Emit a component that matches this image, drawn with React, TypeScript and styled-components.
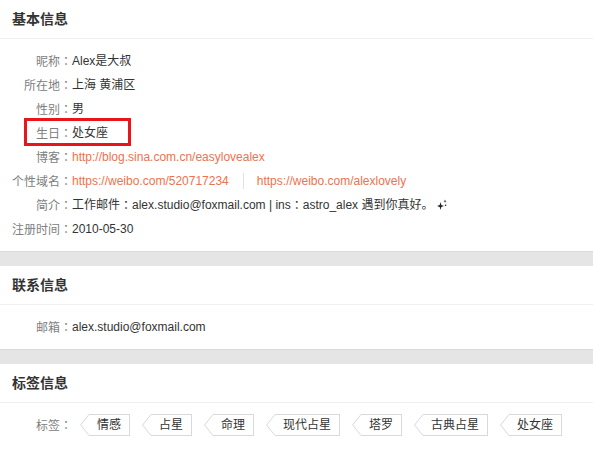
import styled, { createGlobalStyle } from "styled-components";

const GlobalStyle = createGlobalStyle`
  html, body {
    margin: 0;
    padding: 0;
    background: #fff;
  }
  body {
    font-family: "Liberation Sans", Arial, "Noto Sans CJK SC", sans-serif;
    font-size: 12px;
    color: #333;
  }
`;

const Page = styled.div`
  display: flex;
  flex-direction: column;
  width: 593px;
`;

const Section = styled.section`
  background: #fff;
`;

const Header = styled.div`
  height: 38px;
  line-height: 38px;
  padding: 0 12px;
  border-bottom: 1px solid #f0f0f0;
  font-size: 14px;
  font-weight: bold;
  color: #333;
`;

const Body = styled.div`
  padding: 10px 12px;
`;

const Band = styled.div`
  height: 15px;
  background: #e5e5e5;
  border-top: 1px solid #dadada;
  box-sizing: border-box;
`;

const Row = styled.div`
  position: relative;
  display: flex;
  align-items: center;
  line-height: 24px;
  height: 24px;
`;

const Label = styled.span`
  width: 60px;
  flex-shrink: 0;
  text-align: right;
  color: #808080;
  white-space: nowrap;
`;

// full-width colon, centred in its box like the original
const Colon = styled.span`
  font-family: "Noto Sans CJK TC", sans-serif;
`;

const Value = styled.span`
  color: #333;
  white-space: nowrap;
  display: inline-flex;
  align-items: center;
`;

const Link = styled.a`
  color: #eb7350;
  text-decoration: none;
`;

const Divider = styled.span`
  display: inline-block;
  width: 1px;
  height: 16px;
  margin: 0 13px 0 14px;
  background: #e2e2e2;
`;

const Highlight = styled.span`
  position: absolute;
  left: 12px;
  top: -3px;
  width: 107px;
  height: 28px;
  border: 3px solid #e8161b;
  box-sizing: border-box;
  pointer-events: none;
`;

const TagList = styled.div`
  display: flex;
  align-items: center;
  gap: 12px;
  margin-left: 8px;
`;

const Tag = styled.span`
  display: inline-flex;
  height: 22px;
`;

const TagText = styled.span`
  height: 22px;
  line-height: 20px;
  box-sizing: border-box;
  padding: 0 8px 0 8px;
  border: 1px solid #d9d9d9;
  border-left: 0;
  color: #333;
  font-size: 12px;
  white-space: nowrap;
`;

const Sparkle = styled.svg`
  margin-left: 4px;
  margin-top: -2px;
`;

const tags = ["情感", "占星", "命理", "现代占星", "塔罗", "古典占星", "处女座"];

function TagArrow() {
  return (
    <svg width="9" height="22" viewBox="0 0 9 22">
      <path d="M9 0.5 L0.6 11 L9 21.5" fill="#fff" stroke="#d9d9d9" strokeWidth="1" />
    </svg>
  );
}

function Field({ name }: { name: string }) {
  return (
    <Label>
      {name}
      <Colon>：</Colon>
    </Label>
  );
}

export default function App() {
  return (
    <>
      <GlobalStyle />
      <Page>
        <Section>
          <Header>基本信息</Header>
          <Body>
            <Row>
              <Field name="昵称" />
              <Value>Alex是大叔</Value>
            </Row>
            <Row>
              <Field name="所在地" />
              <Value>上海 黄浦区</Value>
            </Row>
            <Row>
              <Field name="性别" />
              <Value>男</Value>
            </Row>
            <Row>
              <Highlight />
              <Field name="生日" />
              <Value>处女座</Value>
            </Row>
            <Row>
              <Field name="博客" />
              <Value>
                <Link href="#">http://blog.sina.com.cn/easylovealex</Link>
              </Value>
            </Row>
            <Row>
              <Field name="个性域名" />
              <Value>
                <Link href="#">https://weibo.com/520717234</Link>
                <Divider />
                <Link href="#">https://weibo.com/alexlovely</Link>
              </Value>
            </Row>
            <Row>
              <Field name="简介" />
              <Value>
                工作邮件<Colon>：</Colon>alex.studio@foxmail.com | ins<Colon>：</Colon>astro_alex 遇到你真好。
                <Sparkle width="10" height="11" viewBox="0 0 10 11">
                  <path d="M3.5 3 L4.3 6 L7 7 L4.3 8 L3.5 11 L2.7 8 L0 7 L2.7 6 Z" fill="#222" />
                  <path d="M8 0.5 L8.4 1.8 L9.6 2.2 L8.4 2.6 L8 3.9 L7.6 2.6 L6.4 2.2 L7.6 1.8 Z" fill="#222" />
                  <circle cx="8.6" cy="6.2" r="0.8" fill="#222" />
                </Sparkle>
              </Value>
            </Row>
            <Row>
              <Field name="注册时间" />
              <Value>2010-05-30</Value>
            </Row>
          </Body>
        </Section>
        <Band />
        <Section>
          <Header>联系信息</Header>
          <Body>
            <Row>
              <Field name="邮箱" />
              <Value>alex.studio@foxmail.com</Value>
            </Row>
          </Body>
        </Section>
        <Band />
        <Section>
          <Header>标签信息</Header>
          <Body>
            <Row>
              <Field name="标签" />
              <TagList>
                {tags.map((t) => (
                  <Tag key={t}>
                    <TagArrow />
                    <TagText>{t}</TagText>
                  </Tag>
                ))}
              </TagList>
            </Row>
          </Body>
        </Section>
      </Page>
    </>
  );
}
